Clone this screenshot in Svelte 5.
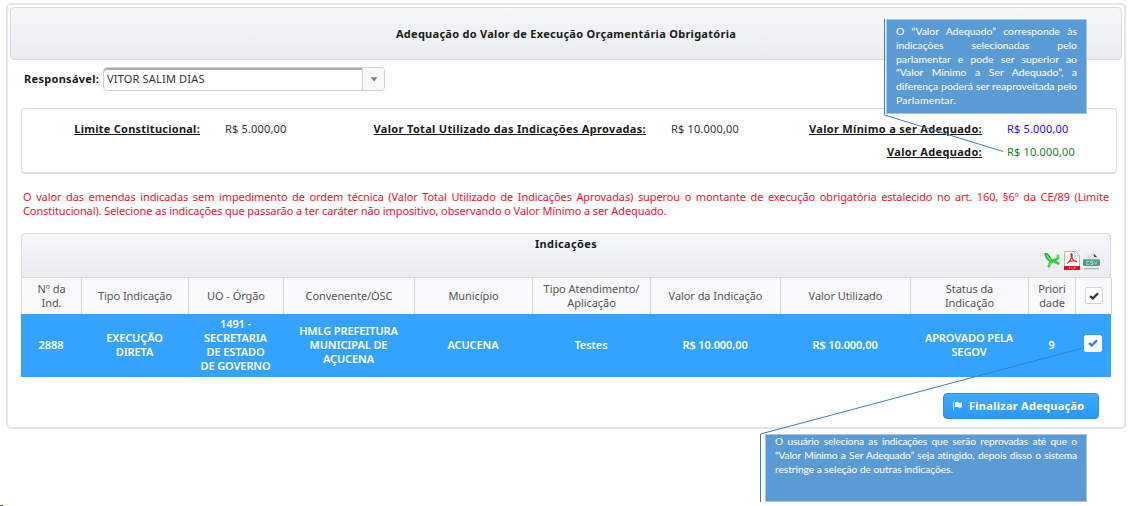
<script>
  const columns = [
    { label: ['Nº da', 'Ind.'], value: ['2888'] },
    { label: ['Tipo Indicação'], value: ['EXECUÇÃO', 'DIRETA'] },
    { label: ['UO - Órgão'], value: ['1491 -', 'SECRETARIA', 'DE ESTADO', 'DE GOVERNO'] },
    { label: ['Convenente/OSC'], value: ['HMLG PREFEITURA', 'MUNICIPAL DE', 'AÇUCENA'] },
    { label: ['Município'], value: ['ACUCENA'] },
    { label: ['Tipo Atendimento/', 'Aplicação'], value: ['Testes'] },
    { label: ['Valor da Indicação'], value: ['R$ 10.000,00'] },
    { label: ['Valor Utilizado'], value: ['R$ 10.000,00'] },
    { label: ['Status da', 'Indicação'], value: ['APROVADO PELA', 'SEGOV'] },
    { label: ['Priori', 'dade'], value: ['9'] }
  ];
  const noteTop = [
    'O “Valor Adequado” corresponde às',
    'indicações selecionadas pelo',
    'parlamentar e pode ser superior ao',
    '“Valor Mínimo a Ser Adequado”, a',
    'diferença poderá ser reaproveitada pelo',
    'Parlamentar.'
  ];
  const noteBottom = [
    'O usuário seleciona as indicações que serão reprovadas até que o',
    '“Valor Mínimo a Ser Adequado” seja atingido, depois disso o sistema',
    'restringe a seleção de outras indicações.'
  ];
</script>

{#snippet check(color)}
  <span class="check">
    <svg width="10" height="8" viewBox="0 0 10 8"><path d="M1 4.2 3.8 6.5 9 1.2" fill="none" stroke={color} stroke-width="2.3" /></svg>
  </span>
{/snippet}

<div class="page">
  <main class="panel">
    <header class="title">Adequação do Valor de Execução Orçamentária Obrigatória</header>

    <div class="field">
      <label for="resp">Responsável:</label>
      <div class="select" id="resp">
        <span class="chosen">VITOR SALIM DIAS</span>
        <span class="arrow"><svg width="8" height="5" viewBox="0 0 8 5"><path d="M.5.3h7L4 4.6z" fill="#808080" /></svg></span>
      </div>
    </div>

    <section class="totals">
      <b class="c1">Limite Constitucional:</b><span>R$ 5.000,00</span>
      <b class="c2">Valor Total Utilizado das Indicações Aprovadas:</b><span>R$ 10.000,00</span>
      <b class="c3">Valor Mínimo a ser Adequado:</b><span class="blue">R$ 5.000,00</span>
      <b class="c4">Valor Adequado:</b><span class="green">R$ 10.000,00</span>
    </section>

    <p class="warning">
      <span class="full">O valor das emendas indicadas sem impedimento de ordem técnica (Valor Total Utilizado de Indicações Aprovadas) superou o montante de execução obrigatória estalecido no art. 160, §6º da CE/89 (Limite</span>
      <span>Constitucional). Selecione as indicações que passarão a ter caráter não impositivo, observando o Valor Mínimo a ser Adequado.</span>
    </p>

    <section class="table">
      <div class="caption">
        <strong>Indicações</strong>
        <div class="exports">
          <svg width="17" height="17" viewBox="0 0 17 17">
            <path d="M.5 1Q3 .5 4.500 2L8.500 8 6 10Q.5 7 .5 1" fill="#1fae2e" />
            <path d="M3 4Q5 8.500 9 8.500L14.300 11.500M4.800 14.300Q6 10 9 8.500M14 3.800V6Q12.500 7.800 9 8.500" fill="none" stroke="#30cf38" stroke-width="2.600" stroke-linecap="round" />
            <path d="M2 2.500 6.500 8M5 13.500 7.500 10.500M14 3.500V5.500" fill="none" stroke="#8df07e" stroke-width="1" />
          </svg>
          <svg width="16" height="19" viewBox="0 0 16 19">
            <path d="M.5.5h11l4 4v14H.5z" fill="#fff" stroke="#aaa" stroke-width=".8" />
            <path d="M11 .8v4h4" fill="#eee" stroke="#bbb" stroke-width=".7" />
            <path d="M3 12.500C6 11 8 7 7 3.500 6.500 2 8.700 2.500 8 5 7.500 7.500 10 11 13 10.700M3 12.500C5 10 10 9 13 10.700" fill="none" stroke="#e02525" stroke-width="1.2" />
            <path d="M0 15h16v4H0z" fill="#d9141e" />
            <path d="M5.500 16v2M5.500 16.300h1.200M8 16v2h1.200M10.500 16v2M10.500 16.300h1.500" stroke="#ff9b9b" stroke-width=".7" />
          </svg>
          <svg width="17" height="18" viewBox="0 0 17 18">
            <path d="M2 7 4.500 2h8l3 5v9H2z" fill="#e4e8e7" />
            <path d="M10.500 1.500 14.500 5.500 11 4.800z" fill="#444" />
            <path d="M1 16h15v1.300H1z" fill="#b5b5b5" />
            <rect y="7" width="17" height="7" rx="1.500" fill="#4f9484" />
            <path d="M0 7.800h17" stroke="#8fc0b3" />
            <path d="M6 9.500H3.800v3H6M10 9.500H7.700v1.500H10v1.500H7.700M11.500 9.500l1.300 3 1.200-3" fill="none" stroke="#b9dcd2" stroke-width=".9" />
          </svg>
        </div>
      </div>
      <div class="row head">
        {#each columns as col}
          <div class="cell">{#each col.label as line}<span>{line}</span>{/each}</div>
        {/each}
        <div class="cell">{@render check('#333')}</div>
      </div>
      <div class="row data">
        {#each columns as col}
          <div class="cell">{#each col.value as line}<span>{line}</span>{/each}</div>
        {/each}
        <div class="cell">{@render check('#2d7df6')}</div>
      </div>
    </section>

    <div class="actions">
      <button>
        <svg width="9" height="10" viewBox="0 0 9 10"><path d="M.5.5v9" stroke="#b9deff" /><path d="M2 1.200Q4 .2 5.500 1.500T9 1.300V6Q7 7.300 5.500 6.200T2 6.300z" fill="#fff" /></svg>
        <span>Finalizar Adequação</span>
      </button>
    </div>
  </main>

  <svg class="leaders" width="1128" height="506" viewBox="0 0 1128 506" fill="none" stroke="#3c7fc0">
    <path d="M884.500 19V115L1003 151.500" />
    <path d="M760.500 502V434L1081 348.500" />
  </svg>
  <aside class="note top">{#each noteTop as line}<span>{line}</span>{/each}</aside>
  <aside class="note bottom">{#each noteBottom as line}<span>{line}</span>{/each}</aside>
  <i class="mark"></i>
</div>

<style>
  :global(body) { background: #fff; }
  .page { position: relative; box-sizing: border-box; width: 1128px; height: 506px; overflow: hidden; padding: 3px 2px 0 6px; font: 11px/14px 'Noto Sans', sans-serif; color: #333; }
  .page * { box-sizing: border-box; }
  .panel { height: 426px; border: 2px solid #e6e6e6; border-radius: 5px; padding: 2px; }
  .title { height: 53px; border: 1px solid #d9dbe0; border-radius: 4px; background: linear-gradient(#f6f7f9, #ebecf0); display: flex; align-items: center; justify-content: center; font-weight: 700; color: #1a1a1a; letter-spacing: 0.275px; }
  .field { display: flex; align-items: center; margin: 7px 0 0 14px; height: 24px; }
  label { width: 79px; font-weight: 700; color: #1a1a1a; letter-spacing: 0.3px; }
  .select { display: flex; width: 282px; height: 24px; border: 1px solid #d3d3d3; border-radius: 4px; letter-spacing: 0.18px; }
  .chosen { flex: 1; padding: 4px 3px; border-right: 1px solid #d3d3d3; box-shadow: inset 0 2px 1px #aaa; border-radius: 3px 0 0 3px; }
  .arrow { width: 21px; display: flex; align-items: center; justify-content: center; background: #f9f9fb; border-radius: 0 4px 4px 0; }
  .totals { display: grid; grid-template-columns: 178px 173px 273px 93px 243px 1fr; grid-template-rows: 23px 23px; margin: 17px 5px 0 11px; height: 66px; border: 1px solid #ddd; border-bottom-width: 2px; border-radius: 4px; padding-top: 13px; }
  .totals b { text-align: right; text-decoration: underline; color: #1a1a1a; white-space: nowrap; letter-spacing: 0.32px; }
  .totals .c1 { letter-spacing: 0.25px; }
  .totals span { padding-left: 25px; letter-spacing: 0.17px; }
  .totals .c4 { grid-column: 5; }
  .totals .blue { color: #2a10ff; }
  .totals .green { color: #1f7d1f; }
  .warning { margin: 16px 13px 0 13px; color: #f8102c; letter-spacing: -0.1px; }
  .warning span { display: block; white-space: nowrap; }
  .warning .full { text-align-last: justify; }
  .table { margin: 15px 12px 0 11px; width: 1090px; }
  .caption { height: 45px; border: 1px solid #d9dbe0; border-radius: 4px 4px 0 0; background: linear-gradient(#f6f7f9, #ebecf0); display: flex; flex-direction: column; align-items: center; padding: 3px 10px 0; color: #1a1a1a; letter-spacing: 0.35px; }
  .exports { align-self: flex-end; display: flex; align-items: center; gap: 3px; }
  .row { display: grid; grid-template-columns: 60px 107px 95px 131px 118px 118px 130px 130px 118px 47px 36px; text-align: center; }
  .cell { display: flex; flex-direction: column; align-items: center; justify-content: center; white-space: nowrap; }
  .head { height: 36px; background: #f9f9fc; color: #555; border-left: 1px solid #d9d9d9; letter-spacing: -0.06px; }
  .head .cell { border-right: 1px solid #d5d5d8; padding-bottom: 1px; }
  .data { height: 63px; background: #33a3ff; color: #fff; font-weight: 600; letter-spacing: -0.1px; }
  .data .cell { padding: 0 0 1px; }
  .check { display: flex; align-items: center; justify-content: center; width: 18px; height: 17px; background: #fff; border: 1px solid #d4d4d4; border-radius: 2px; }
  .data .check { margin-bottom: 4px; border-color: #fff; }
  .actions { display: flex; justify-content: flex-end; padding: 16px 23px 0 0; }
  button { display: flex; align-items: center; gap: 7px; width: 156px; height: 26px; padding: 0 9px; border: 1px solid #2b90e8; border-radius: 4px; background: linear-gradient(#42aaff, #2699fb); color: #fff; font: 700 11px/14px 'Noto Sans', sans-serif; letter-spacing: 0.27px; white-space: nowrap; }
  .leaders { position: absolute; left: 0; top: 0; }
  .note { position: absolute; background: #5b9bd5; color: #fff; font: 10.4px/13.8px Lato, sans-serif; border: 1px solid #a6c9e9; }
  .note span { display: block; white-space: nowrap; text-align-last: justify; }
  .note span:last-child { text-align-last: left; }
  .top { left: 886px; top: 19px; width: 201px; height: 95px; padding: 5px 9px; }
  .top span:last-child { letter-spacing: 0.25px; }
  .bottom { left: 765px; top: 434px; width: 322px; height: 68px; padding: 0 9px; font-size: 10.2px; letter-spacing: -0.14px; }
  .bottom span:last-child { letter-spacing: -0.03px; }
  .mark { position: absolute; left: 0; top: 505px; width: 3px; height: 1px; background: linear-gradient(90deg, #c22, #161, #22c); }
</style>
